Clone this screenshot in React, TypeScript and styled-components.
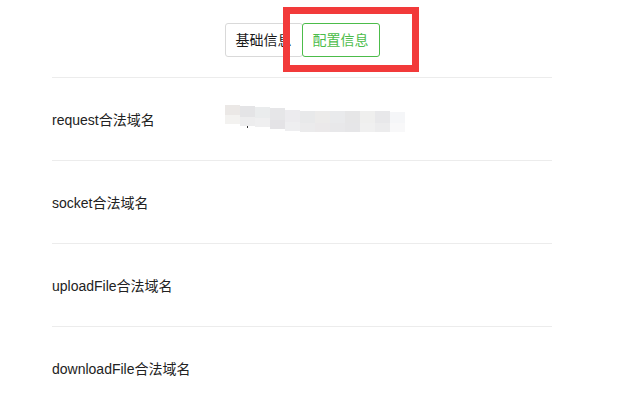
import React from "react";
import styled, { createGlobalStyle } from "styled-components";

const Global = createGlobalStyle`
  html, body { margin: 0; padding: 0; background: #ffffff; }
  body { font-family: "Liberation Sans", Arial, "Noto Sans CJK SC", sans-serif; color: #333333; }
`;

const Page = styled.div`
  width: 500px;
  margin-left: 52px;
`;

const Header = styled.div`
  position: relative;
  display: flex;
  justify-content: center;
  padding: 23px 0 20px;
  border-bottom: 1px solid #ececec;
`;

const TabButton = styled.button<{ $active?: boolean }>`
  position: relative;
  z-index: ${(p) => (p.$active ? 1 : 0)};
  height: 34px;
  width: 78px;
  margin-left: ${(p) => (p.$active ? "-1px" : "0")};
  padding: 0;
  border: 1px solid ${(p) => (p.$active ? "#4cbc4a" : "#d9d9d9")};
  border-radius: 3px;
  background: #ffffff;
  color: ${(p) => (p.$active ? "#4cbc4a" : "#1a1a1a")};
  font-family: "Liberation Sans", Arial, "Noto Sans CJK SC", sans-serif;
  font-size: 14px;
  line-height: 32px;
  cursor: pointer;
`;

const Highlight = styled.div`
  position: absolute;
  left: 231px;
  top: 7px;
  width: 136px;
  height: 65px;
  box-sizing: border-box;
  border: 7px solid #f23a3a;
  z-index: 2;
  pointer-events: none;
`;

const Row = styled.div`
  display: flex;
  align-items: center;
  height: 82px;
  padding-bottom: 1px;
  box-sizing: border-box;
  height: 83px;
  border-bottom: 1px solid #ececec;
  &:last-child {
    border-bottom: none;
  }
`;

const Label = styled.div`
  width: 173px;
  flex: none;
  font-size: 14px;
  color: #222222;
`;

const Mosaic = styled.div`
  position: relative;
  display: flex;
  align-items: flex-start;
  height: 27px;
`;

const Cell = styled.div<{ $top: number; $h: number; $a: string; $b: string }>`
  width: 15px;
  margin-top: ${(p) => p.$top}px;
  height: ${(p) => p.$h}px;
  background: linear-gradient(${(p) => p.$a} 0 55%, ${(p) => p.$b} 55% 100%);
`;

const Dot = styled.div`
  position: absolute;
  left: 22px;
  top: 21px;
  width: 1px;
  height: 2px;
  background: #333;
`;

const cells: [number, number, string, string][] = [
  [0, 19, "#ebe8e6", "#f3f2f0"],
  [1, 20, "#e4e4e6", "#ededee"],
  [2, 20, "#eaeced", "#efeff0"],
  [3, 21, "#e6e6e8", "#e4e3e6"],
  [5, 21, "#ecebee", "#eeeef0"],
  [6, 21, "#e8e9ea", "#ebebec"],
  [6, 21, "#ecebea", "#ebe9ea"],
  [6, 21, "#e9eaec", "#e8e8ea"],
  [6, 21, "#e6e6e7", "#e6e6e8"],
  [6, 21, "#efefee", "#f0f0f0"],
  [6, 21, "#e8e8ea", "#ececed"],
  [7, 20, "#f5f6f8", "#f8f8f9"],
];

const labels = ["request合法域名", "socket合法域名", "uploadFile合法域名", "downloadFile合法域名"];

export default function App() {
  return (
    <>
      <Global />
      <Page>
        <Header>
          <TabButton>基础信息</TabButton>
          <TabButton $active>配置信息</TabButton>
          <Highlight />
        </Header>
        {labels.map((l, i) => (
          <Row key={l}>
            <Label>{l}</Label>
            {i === 0 && (
              <Mosaic>
                {cells.map(([t, h, a, b], k) => (
                  <Cell key={k} $top={t} $h={h} $a={a} $b={b} />
                ))}
                <Dot />
              </Mosaic>
            )}
          </Row>
        ))}
      </Page>
    </>
  );
}
